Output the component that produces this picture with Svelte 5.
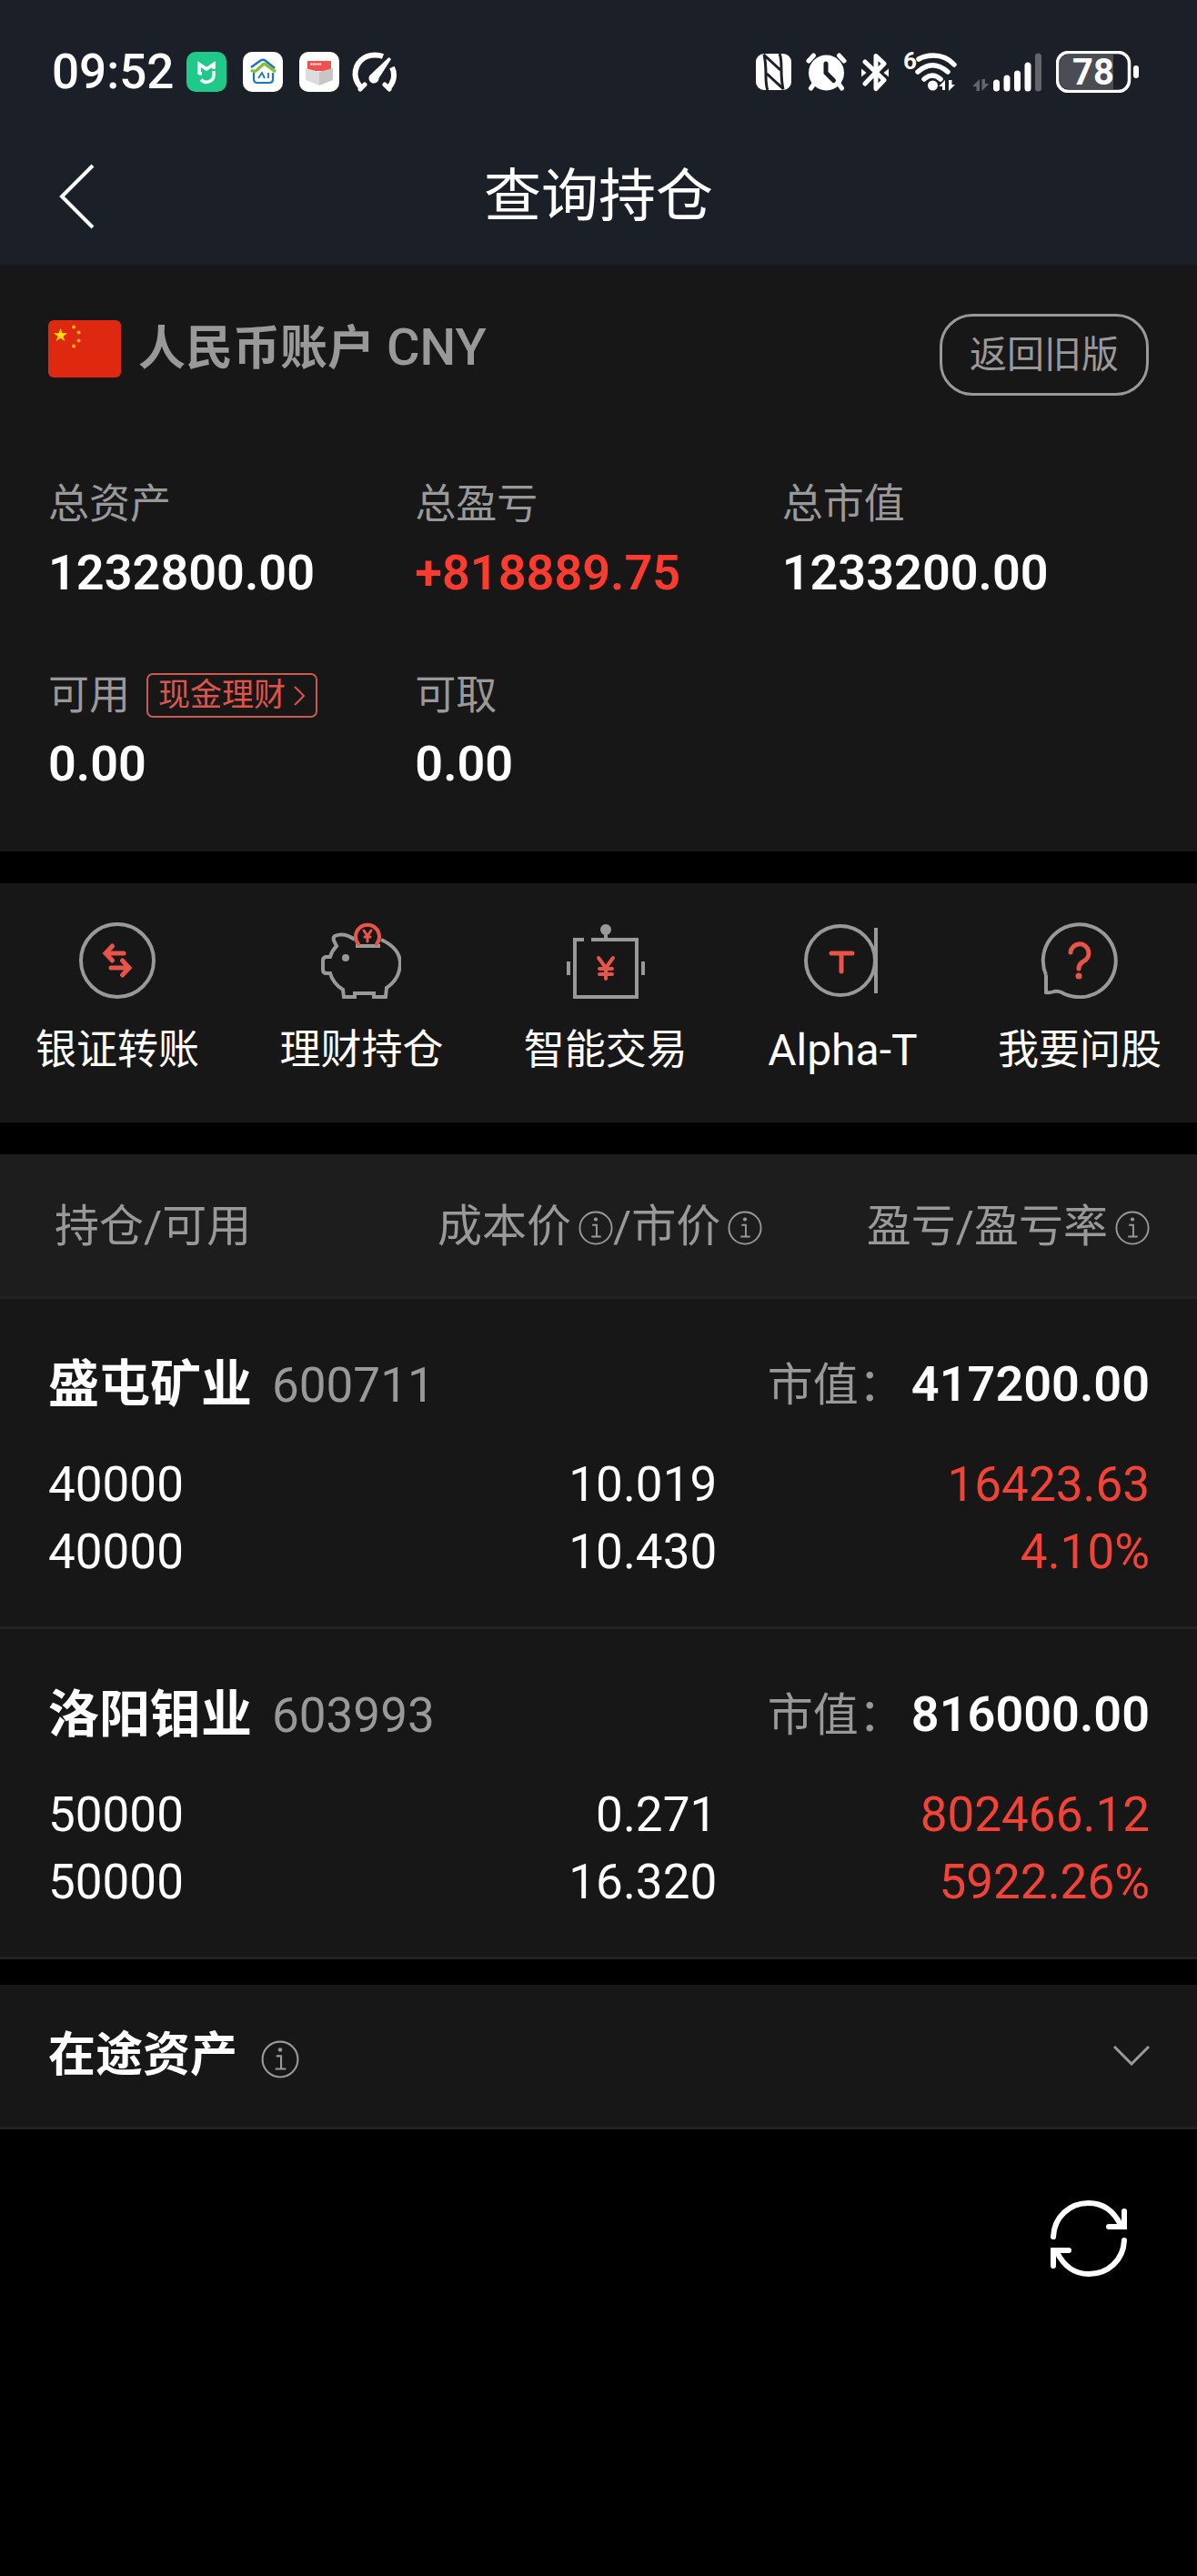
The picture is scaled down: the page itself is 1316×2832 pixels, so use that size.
<script lang="ts">
  const stats = [
    { label: '总资产', value: '1232800.00' },
    { label: '总盈亏', value: '+818889.75', up: true },
    { label: '总市值', value: '1233200.00' },
    { label: '可用', value: '0.00', tag: '现金理财' },
    { label: '可取', value: '0.00' }
  ];

  const shortcuts = [
    { icon: 'transfer', label: '银证转账' },
    { icon: 'piggy', label: '理财持仓' },
    { icon: 'robot', label: '智能交易' },
    { icon: 'alpha', label: 'Alpha-T' },
    { icon: 'ask', label: '我要问股' }
  ];

  const holdings = [
    {
      name: '盛屯矿业',
      code: '600711',
      total: '417200.00',
      amount: '40000',
      available: '40000',
      cost: '10.019',
      price: '10.430',
      profit: '16423.63',
      rate: '4.10%'
    },
    {
      name: '洛阳钼业',
      code: '603993',
      total: '816000.00',
      amount: '50000',
      available: '50000',
      cost: '0.271',
      price: '16.320',
      profit: '802466.12',
      rate: '5922.26%'
    }
  ];

  let open = $state(false);
</script>

{#snippet info(label: string)}
  <button class="info" aria-label={label}>
    <svg viewBox="0 0 40 40">
      <circle cx="20" cy="20" r="18.5" />
      <path d="M16 16.5h5V30M15 30h11" />
      <circle class="dot" cx="20" cy="10" r="2.2" />
    </svg>
  </button>
{/snippet}

<header>
  <div class="status">
    <time>09:52</time>
    <div class="apps">
      <svg width="44" height="44" viewBox="0 0 44 44">
        <rect width="44" height="44" rx="10" fill="#1fc98a" />
        <path d="M14 25V13.500l8 5.500 8-5.500V19M14 24h3M30 21v4a8 8 0 0 1-14 5.500" fill="none" stroke="#fff" stroke-width="3.600" />
      </svg>
      <svg width="44" height="44" viewBox="0 0 44 44">
        <rect width="44" height="44" rx="10" fill="#fff" />
        <path d="M9 17 19.500 9.500q2.500-1.500 5 0L35 18" fill="none" stroke="#1b78b8" stroke-width="2.600" />
        <path d="M9 20q4 3 7-.5L22 14q1.500-1 3 0l11 8" fill="none" stroke="#86bd3c" stroke-width="3.400" />
        <path d="M12 23v7q0 4 4 4h13q4 0 4-4v-7" fill="none" stroke="#1b78b8" stroke-width="2.200" />
        <path d="m17 29 4-6 3 6M28 23v6" fill="none" stroke="#1b78b8" stroke-width="1.800" />
      </svg>
      <svg width="44" height="44" viewBox="0 0 44 44">
        <rect width="44" height="44" rx="10" fill="#fff" />
        <path d="M9 10h26v11H9z" fill="#f2504e" />
        <path d="M12 13.500h12" stroke="#fff" stroke-width="2" stroke-dasharray="2 .6" />
        <path d="m7 18 15 4v15L7 31z" fill="#dcdcdc" />
        <path d="m37 18-15 4v15l15-6z" fill="#c9c5c4" />
      </svg>
      <svg class="gauge" width="50" height="44" viewBox="0 0 50 44">
        <path d="M10.500 39.500A22 22 0 0 1 3.500 25C3.500 12 13 3.500 25 3.500q5 0 9 1.500M44 17q3 6 1.500 13-1.500 6-5.500 9.500" fill="none" stroke="#fff" stroke-width="6" />
        <path d="m9 41 5-5M41 41l-5-5" stroke="#fff" stroke-width="5" stroke-linecap="round" />
        <path d="M40.500 6 21 24.500a5.500 5.500 0 1 0 8.500 4.500L43 8z" fill="#fff" />
      </svg>
    </div>
    <div class="signals">
      <svg width="39" height="40" viewBox="0 0 39 40">
        <rect width="39" height="40" rx="9" fill="#fff" />
        <path d="M8.500 1 27 18M9 1q2 9 2 22t2 17M30.500 39 12 22M30 39q-2-9-2-22T26 0" fill="none" stroke="#1b1f27" stroke-width="3" />
      </svg>
      <svg width="45" height="42" viewBox="0 0 45 42">
        <circle cx="22.500" cy="22" r="19.500" fill="#fff" />
        <path d="m3 9 5.500-6M42 9l-5.500-6M9 34l-3.500 5M36 34l3.500 5" fill="none" stroke="#fff" stroke-width="5" stroke-linecap="round" />
        <path d="M22 12v10l8.500 8.500" fill="none" stroke="#1b1f27" stroke-width="5" stroke-linecap="round" />
      </svg>
      <svg width="30" height="43" viewBox="0 0 30 43">
        <path d="m4 10 21 20-9 9.500V3.500L25 12 4 34" fill="none" stroke="#fff" stroke-width="5" stroke-linejoin="round" stroke-linecap="round" />
        <path d="M0 17.500 5.500 22 0 26.500zM30 17.500 24.500 22l5.500 4.500z" fill="#fff" />
      </svg>
      <svg width="60" height="60" viewBox="0 -8 60 60">
        <text x="0" y="19" class="wifi-gen">6</text>
        <path d="M17 8q7-4 16-4 14 0 23 10M16 22q16-14.500 33 0M23 30q9-8 18 0" fill="none" stroke="#fff" stroke-width="5.500" stroke-linecap="round" />
        <circle cx="32.500" cy="37" r="5.500" fill="#fff" />
        <path d="M46 42V31l-7 7h4v4zM50 31v12l7-7h-3.500v-5z" fill="#fff" />
      </svg>
      <svg width="76" height="43" viewBox="0 0 76 43">
        <path d="M8 42V29l-8 8h4.500v5zM10.500 29v13l8-8H14v-5z" fill="#62656b" />
        <g stroke="#fff" stroke-width="7" stroke-linecap="round">
          <path d="M26.500 33v6M38 28v11M49.500 23v16M61 14v25" />
          <path d="M72.500 4v35" stroke="#62656b" />
        </g>
      </svg>
      <svg width="92" height="46" viewBox="0 0 92 46">
        <rect x="1.500" y="1.500" width="79" height="43" rx="12" fill="none" stroke="#fff" stroke-width="3.500" />
        <path d="M13 4h50v38H13q-9-1-9-9V13q0-8 9-9z" fill="#4a4d53" />
        <text x="41" y="37" class="battery">78</text>
        <rect x="85" y="16" width="6" height="14" rx="3" fill="#fff" />
      </svg>
    </div>
  </div>
  <nav>
    <button class="back" aria-label="返回">
      <svg width="40" height="72" viewBox="0 0 40 72">
        <path d="M37 2 3 36l34 34" fill="none" stroke="#fff" stroke-width="4" />
      </svg>
    </button>
    <h1>查询持仓</h1>
  </nav>
</header>

<main>
  <section class="account">
    <div class="account-head">
      <h2>
        <svg width="80" height="63" viewBox="0 0 80 63">
          <rect width="80" height="63" rx="6" fill="#de2910" />
          <path d="m13.500 9 1.900 5.300h5.600l-4.500 3.400 1.700 5.300-4.700-3.200-4.700 3.200 1.700-5.300L6 14.300h5.600z" fill="#ffde00" />
          <g fill="#f5b700">
            <circle cx="28" cy="7.500" r="2" />
            <circle cx="33.500" cy="13.500" r="2" />
            <circle cx="33.500" cy="22.500" r="2" />
            <circle cx="28" cy="28.500" r="2" />
          </g>
        </svg>
        <span>人民币账户 <span class="currency">CNY</span></span>
      </h2>
      <button class="old">返回旧版</button>
    </div>
    <dl class="stats">
      {#each stats as stat}
        <div>
          <dt>
            {stat.label}
            {#if stat.tag}
              <a class="tag" href="#cash">
                {stat.tag}
                <svg width="14" height="22" viewBox="0 0 14 22">
                  <path d="m2 1 10 10L2 21" fill="none" stroke="currentColor" stroke-width="2" />
                </svg>
              </a>
            {/if}
          </dt>
          <dd class:up={stat.up}>{stat.value}</dd>
        </div>
      {/each}
    </dl>
  </section>

  <section class="shortcuts">
    {#each shortcuts as item}
      <a href="#{item.icon}" class:latin={item.icon === 'alpha'}>
        <svg class="pic" viewBox="0 0 88 84">
          {#if item.icon === 'transfer'}
            <circle cx="44" cy="42" r="40" />
            <path class="red bold" d="M51 34H32M38.500 26 31 34l7.500 8M37 50h20M49.500 42l7.500 8-7.500 8" />
          {:else if item.icon === 'piggy'}
            <path d="M37 19C30 14 22 12 15 15q-2 2-1 5l3 6q-5 5-7 12H5q-3 1-3 4v10q0 4 4 4h4q3 11 14 18l1 8h12v-4h21v4h13l1-10q15-10 15-28Q86 28 66 19" />
            <path d="M38 26h27" />
            <circle class="fill" cx="27" cy="39" r="4" />
            <path class="red" d="M41 24a13 13 0 1 1 20 0" />
            <path class="red thin" d="m47 9 4 6 4-6M51 15v6M48 16h6" />
          {:else if item.icon === 'robot'}
            <path d="M20 19H10v63h68V19H28M3 43v15M85 43v15M44 10v9" />
            <circle class="fill" cx="44" cy="8" r="6" />
            <path class="red" d="m36 39 8 11 8-11M44 50v12M37 51h14M37 57h14" />
          {:else if item.icon === 'alpha'}
            <circle cx="42" cy="42" r="38" />
            <path d="M81 6v72" />
            <path class="red bold" d="M32 34h23M43 34v20" />
          {:else}
            <path d="M7 58A40 40 0 1 1 24 77q-4-2-8-1-5 2-9 1V58" />
            <path class="red bold" d="M34 33a10 10 0 1 1 14 10q-5 3-5 8" />
            <circle class="dot" cx="43" cy="59" r="3.500" />
          {/if}
        </svg>
        {item.label}
      </a>
    {/each}
  </section>

  <table>
    <colgroup>
      <col class="col-amount" />
      <col class="col-price" />
      <col />
    </colgroup>
    <thead>
      <tr>
        <th>持仓/可用</th>
        <th>成本价{@render info('成本价说明')}/市价{@render info('市价说明')}</th>
        <th>盈亏/盈亏率{@render info('盈亏率说明')}</th>
      </tr>
    </thead>
    {#each holdings as item}
      <tbody>
        <tr class="title">
          <th scope="rowgroup">{item.name}<span class="code">{item.code}</span></th>
          <td colspan="2"><span class="caption">市值：</span><b>{item.total}</b></td>
        </tr>
        <tr>
          <td>{item.amount}</td>
          <td>{item.cost}</td>
          <td class="profit">{item.profit}</td>
        </tr>
        <tr class="last">
          <td>{item.available}</td>
          <td>{item.price}</td>
          <td class="profit">{item.rate}</td>
        </tr>
      </tbody>
    {/each}
  </table>

  <section class="transit">
    <h2>在途资产</h2>
    {@render info('在途资产说明')}
    <button class="toggle" class:open aria-label="展开" aria-expanded={open} onclick={() => (open = !open)}>
      <svg width="40" height="22" viewBox="0 0 40 22">
        <path d="m1 1 19 19L39 1" fill="none" stroke="#999" stroke-width="3" />
      </svg>
    </button>
  </section>

  <button class="refresh" aria-label="刷新">
    <svg width="84" height="84" viewBox="0 0 84 84">
      <path d="M3 40C4 18 21 3 42 3c15 0 27 8 35 24M81 12v17H64M81 44C80 66 63 81 42 81 27 81 15 73 7 57M3 72V55h17" />
    </svg>
  </button>
</main>

<style>
  :global(body) {
    background: #000;
    color: #fff;
    font-family: Roboto, 'Noto Sans CJK SC', sans-serif;
  }

  h1,
  h2,
  dl,
  dd {
    margin: 0;
  }

  svg {
    display: block;
    flex: none;
  }

  button {
    padding: 0;
    border: none;
    background: none;
    color: inherit;
    font-family: inherit;
    cursor: pointer;
  }

  a {
    color: inherit;
    text-decoration: none;
  }

  header {
    background: #1b1f27;
  }

  .status {
    display: flex;
    align-items: center;
    height: 122px;
    padding: 18px 63px 0 57px;
  }

  time {
    font-size: 53px;
    font-weight: 500;
  }

  .apps {
    display: flex;
    gap: 18px;
    margin-left: 14px;
  }

  .gauge {
    margin-left: -4px;
  }

  .signals {
    display: flex;
    align-items: center;
    gap: 16px;
    margin-left: auto;
  }

  .wifi-gen {
    fill: #fff;
    font-size: 26px;
    font-weight: 700;
  }

  .battery {
    fill: #fff;
    font-size: 40px;
    font-weight: 700;
    text-anchor: middle;
  }

  nav {
    display: grid;
    grid-template-columns: 1fr auto 1fr;
    align-items: center;
    height: 151px;
    padding: 0 65px;
  }

  .back {
    justify-self: start;
  }

  h1 {
    font-size: 63px;
    font-weight: 400;
    line-height: 76px;
  }

  .account {
    padding: 54px 53px 59px;
    background: #171717;
  }

  .account-head {
    display: flex;
    justify-content: space-between;
    align-items: flex-start;
    margin-bottom: 82px;
  }

  .account h2 {
    display: flex;
    align-items: center;
    gap: 19px;
    height: 76px;
    color: #999;
    font-size: 52px;
    font-weight: 600;
    line-height: 76px;
  }

  .currency {
    font-size: 56px;
    font-weight: 500;
  }

  .old {
    height: 90px;
    padding: 0 30px;
    border: 3px solid #999;
    border-radius: 36px;
    color: #999;
    font-size: 41px;
    line-height: 60px;
  }

  .stats {
    display: grid;
    grid-template-columns: repeat(3, 1fr);
    row-gap: 60px;
    line-height: 75px;
  }

  dt {
    display: flex;
    align-items: center;
    gap: 18px;
    color: #999;
    font-size: 45px;
  }

  dd {
    font-size: 54px;
    font-weight: 600;
  }

  .up {
    color: #ff3b30;
  }

  .tag {
    display: flex;
    align-items: center;
    gap: 8px;
    box-sizing: border-box;
    height: 49px;
    padding: 0 11px;
    border: 2px solid #c95a50;
    border-radius: 7px;
    color: #dc544a;
    font-size: 35px;
  }

  .shortcuts {
    display: flex;
    justify-content: space-between;
    margin: 35px 0;
    padding: 43px 39px 49px;
    background: #171717;
  }

  .shortcuts a {
    display: flex;
    flex-direction: column;
    align-items: center;
    gap: 27px;
    font-size: 45px;
    line-height: 60px;
  }

  .shortcuts .latin {
    font-size: 48px;
  }

  .pic {
    width: 88px;
    height: 84px;
    fill: none;
    stroke: #999;
    stroke-width: 4;
  }

  .pic .red {
    stroke: #e85449;
    stroke-linecap: round;
  }

  .pic .bold {
    stroke-width: 5;
  }

  .pic .thin {
    stroke-width: 3;
  }

  .pic .fill {
    fill: #999;
    stroke: none;
  }

  .pic .dot {
    fill: #e85449;
    stroke: none;
  }

  table {
    width: 100%;
    table-layout: fixed;
    border-spacing: 0;
    background: #171717;
    line-height: 74px;
  }

  .col-amount {
    width: 34%;
  }

  .col-price {
    width: 30%;
  }

  th,
  td {
    padding: 0;
    font-size: 53px;
    text-align: right;
    white-space: nowrap;
  }

  thead th {
    box-sizing: border-box;
    height: 159px;
    padding-top: 3px;
    border-bottom: 3px solid #222;
    background: #1d1d1d;
    color: #999;
    font-size: 49px;
    font-weight: 400;
  }

  th:first-child,
  td:first-child {
    padding-left: 53px;
    text-align: left;
  }

  thead th:first-child {
    padding-left: 60px;
  }

  thead th:nth-child(2) {
    padding-right: 4px;
  }

  th:last-child,
  td:last-child {
    padding-right: 52px;
  }

  td:nth-child(2):not([colspan]) {
    padding-right: 54px;
  }

  .title th,
  .title td {
    height: 167px;
    box-sizing: border-box;
    padding-top: 56px;
    padding-bottom: 35px;
  }

  .title th {
    font-size: 56px;
    font-weight: 700;
  }

  .last td {
    padding-bottom: 45px;
    border-bottom: 3px solid #222;
  }

  .code {
    margin-left: 22px;
    color: #999;
    font-size: 53px;
    font-weight: 400;
  }

  .caption {
    color: #999;
    font-size: 50px;
  }

  b {
    margin-left: 8px;
    font-size: 54px;
    font-weight: 600;
  }

  .profit {
    color: #f44336;
  }

  .info {
    width: 38px;
    height: 38px;
    margin-left: 8px;
    vertical-align: -4px;
  }

  .info svg {
    width: 100%;
    height: 100%;
    fill: none;
    stroke: #999;
    stroke-width: 2;
  }

  .info .dot {
    fill: #999;
    stroke: none;
  }

  .transit {
    display: flex;
    align-items: center;
    height: 156px;
    margin-top: 28px;
    padding: 0 52px 0 53px;
    border-bottom: 3px solid #222;
    background: #171717;
  }

  .transit h2 {
    font-size: 52px;
    font-weight: 600;
    line-height: 76px;
  }

  .transit .info {
    width: 42px;
    height: 42px;
    margin: 8px 0 0 26px;
  }

  .toggle {
    margin-left: auto;
  }

  .open svg {
    transform: rotate(180deg);
  }

  .refresh {
    display: block;
    margin: 78px 77px 0 auto;
  }

  .refresh path {
    fill: none;
    stroke: #fff;
    stroke-width: 6;
    stroke-linecap: round;
  }
</style>
